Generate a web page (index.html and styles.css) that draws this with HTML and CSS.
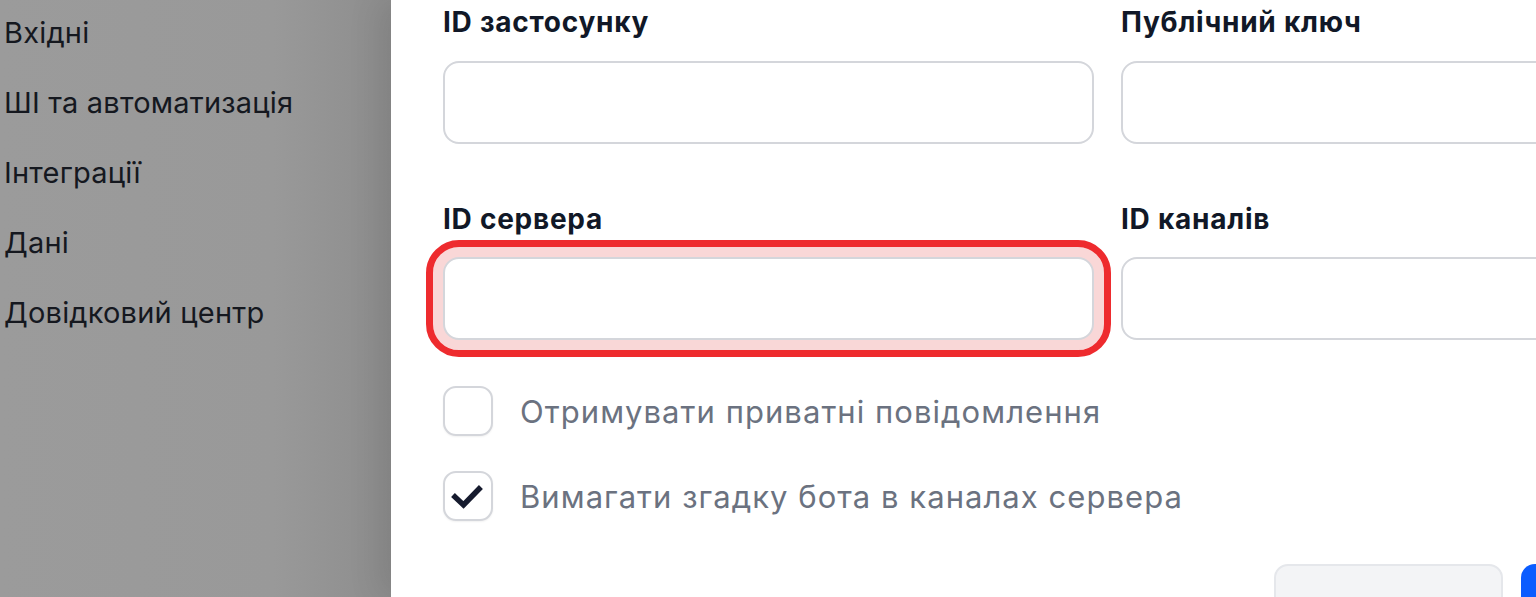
FILE: index.html
```html
<!DOCTYPE html>
<html lang="uk">
<head>
<meta charset="utf-8">
<title>Інтеграції</title>
<link rel="stylesheet" href="styles.css">
</head>
<body>
<div class="app">
  <nav class="sidebar">
    <div class="nav-item">Вхідні</div>
    <div class="nav-item">ШІ та автоматизація</div>
    <div class="nav-item">Інтеграції</div>
    <div class="nav-item">Дані</div>
    <div class="nav-item">Довідковий центр</div>
  </nav>
  <main class="panel">
    <div class="grid">
      <div class="field">
        <label class="label">ID застосунку</label>
        <div class="input"></div>
      </div>
      <div class="field">
        <label class="label">Публічний ключ</label>
        <div class="input"></div>
      </div>
      <div class="field">
        <label class="label">ID сервера</label>
        <div class="input input-focus"></div>
      </div>
      <div class="field">
        <label class="label">ID каналів</label>
        <div class="input"></div>
      </div>
    </div>
    <div class="checks">
      <div class="check-row">
        <span class="box"></span>
        <span class="check-label">Отримувати приватні повідомлення</span>
      </div>
      <div class="check-row">
        <span class="box">
          <svg class="tick" viewBox="0 0 50 50" width="50" height="50"><path d="M12 26 L20.5 34 L36 18" fill="none" stroke="#161b2e" stroke-width="5.5" stroke-linecap="square" stroke-linejoin="miter"/></svg>
        </span>
        <span class="check-label">Вимагати згадку бота в каналах сервера</span>
      </div>
    </div>
    <div class="actions">
      <div class="btn btn-secondary"></div>
      <div class="btn btn-primary"></div>
    </div>
  </main>
</div>
</body>
</html>
```

FILE: styles.css
```css
* { box-sizing: border-box; }
html, body {
  margin: 0;
  padding: 0;
  width: 1536px;
  height: 597px;
  overflow: hidden;
  background: #ffffff;
}
body {
  font-family: Inter, "Noto Sans", "Liberation Sans", sans-serif;
}
.app {
  display: flex;
  height: 597px;
}
.sidebar {
  width: 391px;
  flex: 0 0 391px;
  background: linear-gradient(to right, #9b9b9b 0%, #999999 70%, #8d8d8d 100%);
  padding: 0 0 0 4px;
  margin-top: -2px;
}
.nav-item {
  font-size: 29px;
  letter-spacing: 0.2px;
  line-height: 70px;
  color: #15181f;
  white-space: nowrap;
}
.panel {
  flex: 1;
  background: #ffffff;
  padding: 6px 0 0 52px;
  box-shadow: -14px 0 30px rgba(0, 0, 0, 0.08);
  position: relative;
  overflow: hidden;
}
.grid {
  display: grid;
  grid-template-columns: 651px 651px;
  column-gap: 27px;
  row-gap: 59px;
}
.field {
  display: flex;
  flex-direction: column;
}
.label {
  font-size: 28px;
  letter-spacing: 0.75px;
  font-weight: 700;
  line-height: 32px;
  color: #111827;
  margin-bottom: 23px;
  white-space: nowrap;
}
.grid .field:nth-child(n+3) .label { margin-bottom: 22px; }
.input {
  height: 83px;
  border: 2px solid #d4d6db;
  border-radius: 16px;
  background: #ffffff;
}
.input-focus {
  box-shadow: 0 0 0 10px #f9d7d7;
  outline: 7px solid #ee2b2e;
  outline-offset: 10px;
}
.checks {
  margin-top: 46px;
  display: flex;
  flex-direction: column;
  gap: 35px;
}
.check-row {
  display: flex;
  align-items: center;
  gap: 27px;
  height: 50px;
}
.box {
  width: 50px;
  height: 50px;
  border: 2px solid #d4d6db;
  border-radius: 13px;
  background: #ffffff;
  display: flex;
  align-items: center;
  justify-content: center;
  box-shadow: 0 1px 2px rgba(0, 0, 0, 0.06);
}
.tick { display: block; margin: -2px; }
.check-label {
  font-size: 31px;
  letter-spacing: 1.05px;
  color: #6b7280;
  white-space: nowrap;
}
.actions {
  margin-top: 43px;
  display: flex;
  gap: 18px;
  padding-left: 831px;
}
.btn {
  height: 70px;
  border-radius: 14px;
  flex: 0 0 auto;
}
.btn-secondary {
  width: 229px;
  background: #f3f4f6;
  border: 2px solid #e5e7eb;
}
.btn-primary {
  width: 200px;
  background: #0b5cff;
}
```
